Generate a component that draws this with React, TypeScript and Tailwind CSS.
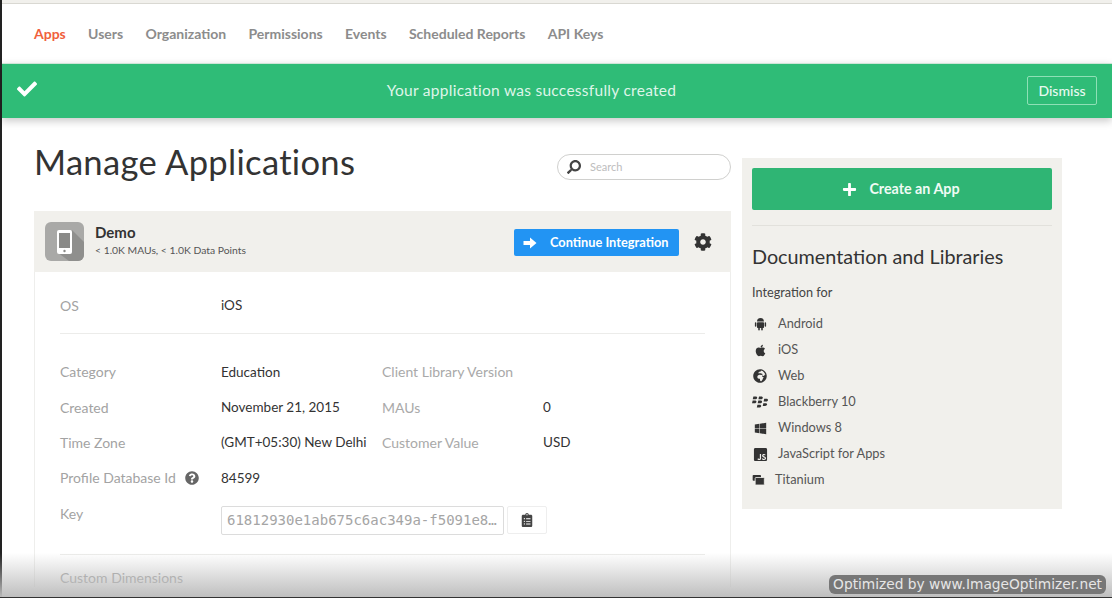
import React from "react";
import { FaApple, FaGlobeAfrica, FaBlackberry, FaWindows, FaJsSquare, FaCog, FaCheck, FaPlus, FaSearch, FaClipboardList, FaQuestionCircle } from "react-icons/fa";

const nav = ["Users", "Organization", "Permissions", "Events", "Scheduled Reports", "API Keys"];

function Row({ label, value, label2, value2 }: { label: string; value: string; label2?: string; value2?: string }) {
  return (
    <div className="flex h-[35.4px] items-center text-[14px]">
      <div className="w-[161px] text-[#a3a3a3]">{label}</div>
      <div className="w-[161px] whitespace-nowrap text-[13.5px] text-[#333]">{value}</div>
      <div className="w-[161px] text-[#a9a9a9]">{label2}</div>
      <div className="text-[13.5px] text-[#333]">{value2}</div>
    </div>
  );
}

function AndroidIcon() {
  return (
    <svg viewBox="0 0 14 16" className="h-[14px] w-[13px]" fill="currentColor">
      <path d="M3 5.2a4 4 0 0 1 8 0z" />
      <rect x="3" y="5.9" width="8" height="6.6" rx="0.8" />
      <rect x="0.6" y="5.9" width="1.7" height="5.2" rx="0.85" />
      <rect x="11.7" y="5.9" width="1.7" height="5.2" rx="0.85" />
      <rect x="4.4" y="11.5" width="1.8" height="4" rx="0.9" />
      <rect x="7.8" y="11.5" width="1.8" height="4" rx="0.9" />
    </svg>
  );
}

const docs: [React.ReactNode, string][] = [
  [<AndroidIcon />, "Android"],
  [<FaApple className="h-[13px] w-[13px]" />, "iOS"],
  [<FaGlobeAfrica className="h-[14px] w-[14px]" />, "Web"],
  [<FaBlackberry className="h-[16px] w-[16px]" />, "Blackberry 10"],
  [<FaWindows className="h-[13px] w-[13px]" />, "Windows 8"],
  [<FaJsSquare className="h-[15px] w-[15px]" />, "JavaScript for Apps"],
];

export default function App() {
  return (
    <div className="relative h-[598px] w-[1112px] overflow-hidden bg-white font-['Lato','Liberation_Sans',sans-serif] text-[#333]">
      <div className="flex h-full flex-col border-l-2 border-[#222]">
        <div className="h-[4px] shrink-0 border-b border-[#d9d8d2] bg-[#f1f0ec]" />
        <nav className="flex h-[59px] shrink-0 items-center gap-[22.3px] pl-[32px] text-[14px] font-bold">
          <span className="text-[#f0603c]">Apps</span>
          {nav.map((n) => (
            <span key={n} className="text-[#8c8c8c]">{n}</span>
          ))}
        </nav>
        <div className="relative flex h-[55px] shrink-0 items-center justify-center border-t border-[#cfe5d8] bg-[#2fbc77] shadow-[0_3px_8px_rgba(0,0,0,0.22)]">
          <FaCheck className="absolute left-[15px] top-[15px] h-[20px] w-[20px] text-white" />
          <span className="mr-[51px] text-[15.5px] tracking-[0.27px] text-[#dff5e9]">Your application was successfully created</span>
          <button className="absolute right-[15px] top-[12px] h-[29px] w-[70px] rounded-[2px] border border-[#8fe0b6] text-[14px] font-medium text-[#e8f9f0]">Dismiss</button>
        </div>
        <main className="flex min-h-0 flex-1 items-start gap-[11px] pl-[32px]">
          <section className="w-[697px] shrink-0">
            <div className="flex h-[93px] items-start justify-between">
              <h1 className="pt-[24px] text-[34.6px] leading-[40px] tracking-[0.3px] text-[#333]">Manage Applications</h1>
              <div className="mt-[36px] flex h-[26px] w-[174px] items-center gap-[9px] rounded-full border border-[#d0d0ce] pl-[9px] text-[11px] text-[#bdbdbd]">
                <FaSearch className="h-[14px] w-[14px] -scale-x-100 text-[#444]" />
                <span>Search</span>
              </div>
            </div>
            <div className="flex h-[61px] items-center bg-[#f1f0ec] pl-[11px] pr-[19px]">
              <svg viewBox="0 0 39 39" className="h-[39px] w-[39px]">
                <rect width="39" height="39" rx="6" fill="#a9a9a7" />
                <path d="M27 8 L39 20 V33 A6 6 0 0 1 33 39 H24 L12 30 Z" fill="#8f8f8d" />
                <rect x="12" y="8" width="15" height="24" rx="2" fill="#fff" />
                <rect x="14" y="11" width="11" height="15" fill="#8a8a88" />
                <circle cx="19.5" cy="29" r="1.2" fill="#8a8a88" />
              </svg>
              <div className="ml-[11px] flex flex-col pb-[5px]">
                <span className="text-[15px] font-bold leading-[22px] text-[#333]">Demo</span>
                <span className="text-[10.35px] leading-[15px] text-[#555]">&lt; 1.0K MAUs, &lt; 1.0K Data Points</span>
              </div>
              <button className="ml-auto mt-[1px] flex h-[27px] w-[165px] items-center gap-[13px] rounded-[2px] bg-[#2294f3] pl-[9px] pt-[1px] text-[12.8px] font-bold text-white">
                <svg viewBox="0 0 14 14" className="h-[14px] w-[14px]" fill="currentColor">
                  <path d="M0.5 5 H7 V1.5 L13.5 7 L7 12.5 V9 H0.5 Z" />
                </svg>
                <span>Continue Integration</span>
              </button>
              <FaCog className="ml-[15px] mt-[1px] h-[18px] w-[18px] text-[#333]" />
            </div>
            <div className="border-x border-[#eeeeec] px-[25px]">
              <div className="flex h-[62px] items-center border-b border-[#ececea] pt-[5px] text-[14px]">
                <div className="w-[161px] text-[#a3a3a3]">OS</div>
                <div className="text-[13.5px] text-[#333]">iOS</div>
              </div>
              <div className="pt-[20px]">
                <Row label="Category" value="Education" label2="Client Library Version" />
                <Row label="Created" value="November 21, 2015" label2="MAUs" value2="0" />
                <Row label="Time Zone" value="(GMT+05:30) New Delhi" label2="Customer Value" value2="USD" />
                <div className="flex h-[35.4px] items-center text-[14px]">
                  <div className="flex w-[161px] items-center gap-[9px] text-[#a3a3a3]">
                    Profile Database Id <FaQuestionCircle className="h-[14px] w-[14px] text-[#666]" />
                  </div>
                  <div className="text-[13.5px] text-[#333]">84599</div>
                </div>
                <div className="flex items-start pt-[10.4px] text-[14px]">
                  <div className="w-[161px] leading-[16px] text-[#a3a3a3]">Key</div>
                  <div className="flex h-[29px] w-[283px] items-center overflow-hidden whitespace-nowrap rounded-[2px] border border-[#dcdcdc] pl-[5px] font-['DejaVu_Sans_Mono','Liberation_Mono',monospace] text-[14px] text-[#a5a5a5]">
                    61812930e1ab675c6ac349a-f5091e8…
                  </div>
                  <button className="ml-[3px] flex h-[28px] w-[40px] items-center justify-center rounded-[2px] border border-[#eeeeee] text-[#444]">
                    <FaClipboardList className="h-[14px] w-[12px]" />
                  </button>
                </div>
              </div>
              <div className="mt-[19px] border-t border-[#ececea] pt-[14px] text-[14px] leading-[18px] text-[#a3a3a3]">Custom Dimensions</div>
            </div>
          </section>
          <aside className="mt-[40px] h-[351px] w-[320px] shrink-0 bg-[#f1f0ec] px-[10px] pt-[10px]">
            <button className="flex h-[42px] w-[300px] items-center justify-center gap-[12px] rounded-[2px] bg-[#2fb574] pr-[2px] text-[14.3px] font-bold text-[#f0fbf5]">
              <FaPlus className="h-[15px] w-[15px] text-white" />
              Create an App
            </button>
            <div className="mt-[15px] border-t border-[#e2e1dc] pt-[17px] text-[19.8px] leading-[26px] text-[#333]">Documentation and Libraries</div>
            <div className="mt-[14px] text-[12.7px] leading-[18px] text-[#444]">Integration for</div>
            <ul className="mt-[10px] text-[12.8px] text-[#555]">
              {docs.map(([icon, label]) => (
                <li key={label} className="flex h-[26px] items-center">
                  <span className="flex w-[16px] justify-center text-[#333]">{icon}</span>
                  <span className="ml-[10px]">{label}</span>
                </li>
              ))}
              <li className="flex h-[26px] items-center">
                <svg viewBox="0 0 14 12" className="h-[10px] w-[13px] text-[#333]" fill="currentColor">
                  <rect x="0" y="0" width="10" height="7" rx="1" />
                  <rect x="3" y="3" width="11" height="9" rx="1" stroke="#f1f0ec" strokeWidth="1" />
                </svg>
                <span className="ml-[10px]">Titanium</span>
              </li>
            </ul>
          </aside>
        </main>
      </div>
      <div className="pointer-events-none absolute bottom-0 left-0 h-[45px] w-full bg-gradient-to-b from-transparent to-[#bdbdbd]" />
      <div className="absolute bottom-0 left-0 h-px w-full bg-[#333]" />
      <div className="absolute bottom-[4px] right-[6px] rounded-[6px] bg-[#777] px-[4px] font-['DejaVu_Sans','Liberation_Sans',sans-serif] text-[13.75px] leading-[19px] text-[#e6e6e6]">
        Optimized by www.ImageOptimizer.net
      </div>
    </div>
  );
}
